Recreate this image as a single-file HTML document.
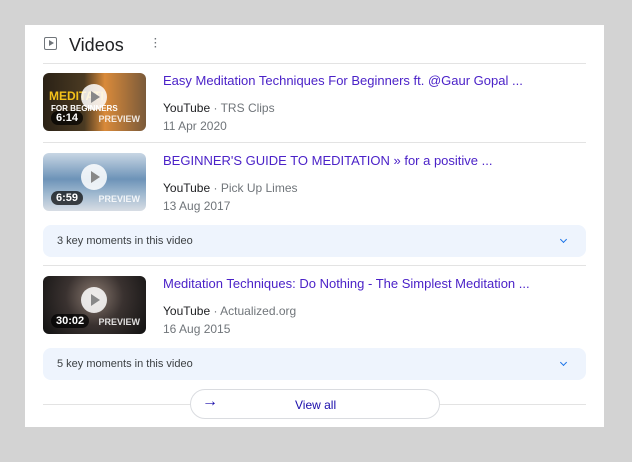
<!DOCTYPE html><html><head><style>
body{margin:0;width:632px;height:462px;background:#d3d3d3;font-family:"Liberation Sans",Arial,sans-serif;position:relative;overflow:hidden}
.card{position:absolute;left:25px;top:25px;width:579px;height:402px;background:#fff}
.a{position:absolute}
.hr{position:absolute;left:18px;width:543px;height:1px;background:#e3e3e3}
.th{position:absolute;left:18px;width:103px;height:58px;border-radius:6px;overflow:hidden}
.play{position:absolute;left:38px;top:11px;width:26px;height:26px;border-radius:50%;background:rgba(255,255,255,.85)}
.play:after{content:"";position:absolute;left:10px;top:7px;border-left:9px solid #888;border-top:6px solid transparent;border-bottom:6px solid transparent}
.dur{position:absolute;left:8px;bottom:6px;background:rgba(0,0,0,.7);color:#fff;font-size:11px;font-weight:bold;padding:1px 5px;border-radius:8px}
.pv{position:absolute;right:6px;bottom:7px;color:#fff;font-size:9px;font-weight:bold;opacity:.85}
.t{position:absolute;left:138px;font-size:13px;color:#4b22c8;white-space:nowrap}
.s{position:absolute;left:138px;font-size:12px;color:#70757a}
.s b{font-weight:normal;color:#202124}
.km{position:absolute;left:18px;width:543px;height:32px;background:#eef4fd;border-radius:8px;font-size:11px;color:#3c4043}
.km span{position:absolute;left:14px;top:10px}
.km i{position:absolute;right:20px;top:12px;width:4px;height:4px;border-right:1.2px solid #1a73e8;border-bottom:1.2px solid #1a73e8;transform:rotate(45deg)}
</style></head><body><div class="card">
<div class="a" style="left:19px;top:12px;width:11px;height:11px;border:1.5px solid #70757a;border-radius:2px"></div>
<div class="a" style="left:24px;top:15px;border-left:5px solid #70757a;border-top:3.5px solid transparent;border-bottom:3.5px solid transparent"></div>
<div class="a" style="left:44px;top:10px;font-size:18px;color:#202124">Videos</div>
<div class="a" style="left:129px;top:13px;font-size:10px;line-height:4px;color:#70757a;font-weight:bold">·<br>·<br>·</div>
<div class="hr" style="top:38px"></div>

<div class="th" style="top:48px;background:linear-gradient(90deg,#2a2116 0%,#4a3a22 40%,#d98a3a 60%,#7a5a3a 100%)"><div class="a" style="left:6px;top:16px;color:#f4c21a;font-weight:bold;font-size:12px">MEDITATI</div><div class="a" style="left:8px;top:31px;color:#fff;font-weight:bold;font-size:8px">FOR BEGINNERS</div><div class="play"></div><div class="dur">6:14</div><div class="pv">PREVIEW</div></div>
<div class="t" style="top:48px">Easy Meditation Techniques For Beginners ft. @Gaur Gopal ...</div>
<div class="s" style="top:76px"><b>YouTube</b> · TRS Clips</div>
<div class="s" style="top:94px">11 Apr 2020</div>
<div class="hr" style="top:117px"></div>

<div class="th" style="top:128px;background:linear-gradient(180deg,#c8d6e4 0%,#6d93b8 45%,#9eb8cf 70%,#d8dde4 100%)"><div class="play"></div><div class="dur">6:59</div><div class="pv">PREVIEW</div></div>
<div class="t" style="top:128px">BEGINNER'S GUIDE TO MEDITATION » for a positive ...</div>
<div class="s" style="top:156px"><b>YouTube</b> · Pick Up Limes</div>
<div class="s" style="top:174px">13 Aug 2017</div>
<div class="km" style="top:200px"><span>3 key moments in this video</span><i></i></div>
<div class="hr" style="top:240px"></div>

<div class="th" style="top:251px;background:radial-gradient(circle at 50% 35%,#8a7a70 0%,#3a3230 45%,#111 100%)"><div class="play"></div><div class="dur">30:02</div><div class="pv">PREVIEW</div></div>
<div class="t" style="top:251px">Meditation Techniques: Do Nothing - The Simplest Meditation ...</div>
<div class="s" style="top:279px"><b>YouTube</b> · Actualized.org</div>
<div class="s" style="top:297px">16 Aug 2015</div>
<div class="km" style="top:323px"><span>5 key moments in this video</span><i></i></div>

<div class="hr" style="top:379px"></div>
<div class="a" style="left:165px;top:364px;width:248px;height:28px;background:#fff;border:1px solid #dadce0;border-radius:15px"></div>
<div class="a" style="left:177px;top:368px;font-size:16px;font-weight:bold;color:#1a0dab">→</div>
<div class="a" style="left:270px;top:373px;font-size:12px;color:#1a0dab">View all</div>
</div></body></html>
